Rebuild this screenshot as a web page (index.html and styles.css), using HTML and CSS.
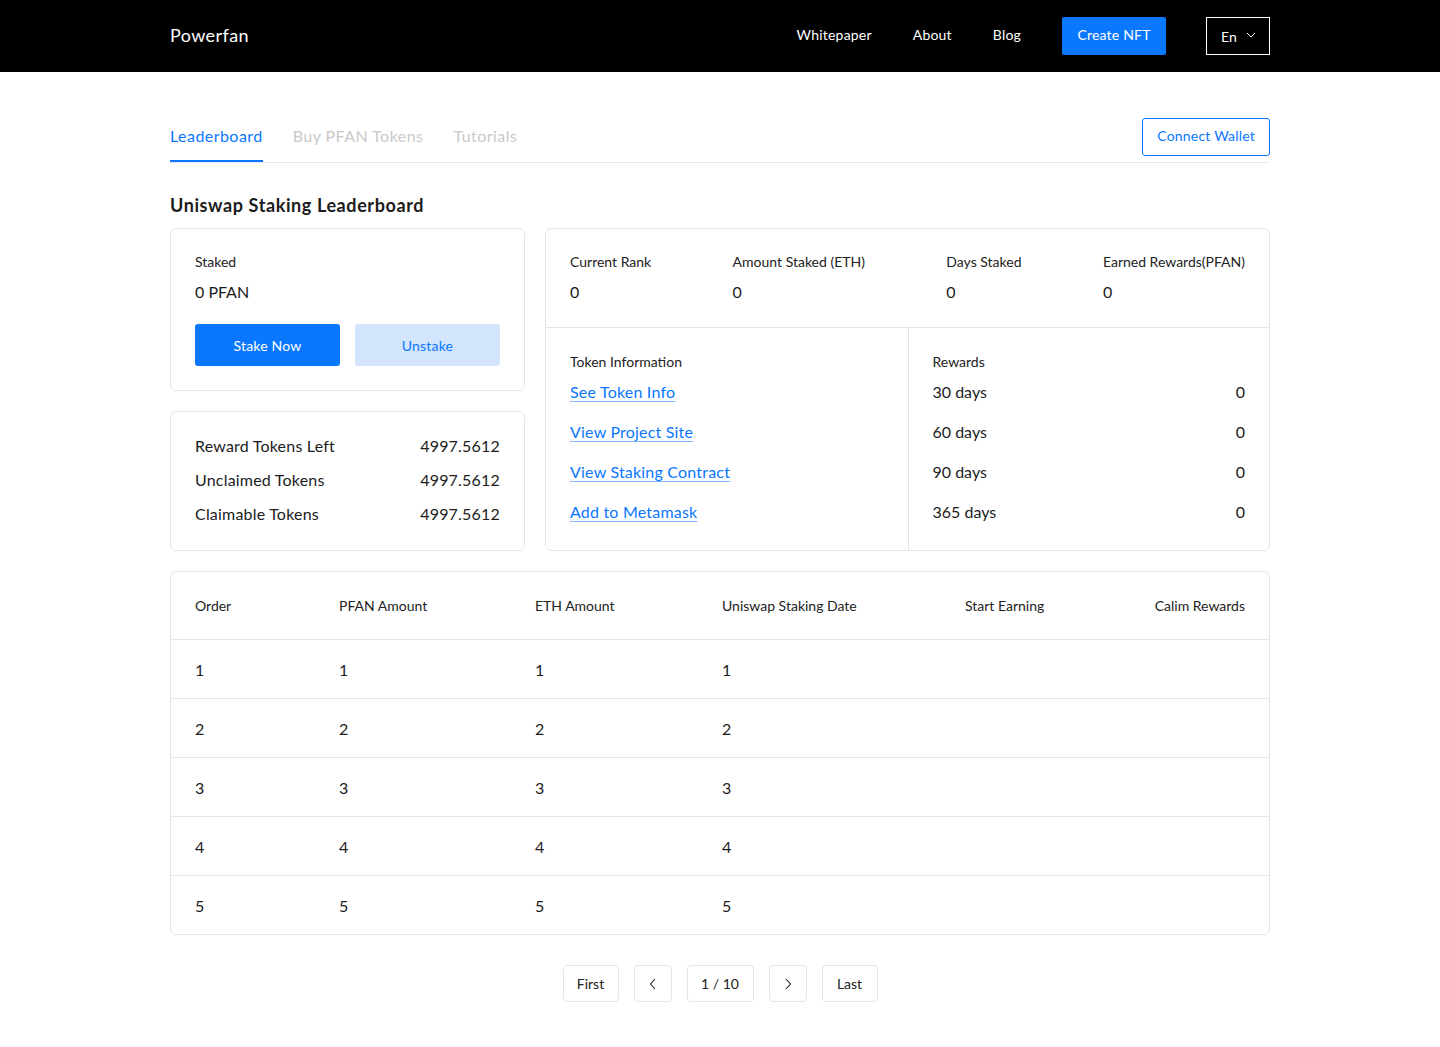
FILE: index.html
```html
<!DOCTYPE html>
<html lang="en">
<head>
<meta charset="utf-8">
<title>Powerfan - Uniswap Staking Leaderboard</title>
<link rel="stylesheet" href="styles.css">
</head>
<body>
<header class="topbar">
  <div class="wrap topbar-inner">
    <div class="logo">Powerfan</div>
    <nav class="nav">
      <a class="nav-link" href="#">Whitepaper</a>
      <a class="nav-link" href="#">About</a>
      <a class="nav-link" href="#">Blog</a>
      <a class="btn-create" href="#">Create NFT</a>
      <div class="lang">En
        <svg class="lang-caret" width="10" height="6" viewBox="0 0 10 6"><path d="M1 1l4 4 4-4" fill="none" stroke="#fff" stroke-width="1"/></svg>
      </div>
    </nav>
  </div>
</header>

<main class="wrap">
  <div class="tabs-bar">
    <div class="tabs">
      <a class="tab active" href="#">Leaderboard</a>
      <a class="tab" href="#">Buy PFAN Tokens</a>
      <a class="tab" href="#">Tutorials</a>
    </div>
    <button class="btn-outline">Connect Wallet</button>
  </div>

  <h1 class="page-title">Uniswap Staking Leaderboard</h1>

  <div class="cards">
    <div class="left-col">
      <section class="card stake-card">
        <div class="label">Staked</div>
        <div class="value">0 PFAN</div>
        <div class="stake-actions">
          <button class="btn-primary">Stake Now</button>
          <button class="btn-light">Unstake</button>
        </div>
      </section>
      <section class="card tokens-card">
        <div class="kv"><span>Reward Tokens Left</span><span>4997.5612</span></div>
        <div class="kv"><span>Unclaimed Tokens</span><span>4997.5612</span></div>
        <div class="kv"><span>Claimable Tokens</span><span>4997.5612</span></div>
      </section>
    </div>

    <section class="card info-card">
      <div class="stats">
        <div class="stat"><div class="label">Current Rank</div><div class="value">0</div></div>
        <div class="stat"><div class="label">Amount Staked (ETH)</div><div class="value">0</div></div>
        <div class="stat"><div class="label">Days Staked</div><div class="value">0</div></div>
        <div class="stat"><div class="label">Earned Rewards(PFAN)</div><div class="value">0</div></div>
      </div>
      <div class="info-split">
        <div class="info-col">
          <div class="label">Token Information</div>
          <div class="links">
            <a class="link" href="#">See Token Info</a>
            <a class="link" href="#">View Project Site</a>
            <a class="link" href="#">View Staking Contract</a>
            <a class="link" href="#">Add to Metamask</a>
          </div>
        </div>
        <div class="info-col rewards">
          <div class="label">Rewards</div>
          <div class="links">
            <div class="reward-row"><span>30 days</span><span>0</span></div>
            <div class="reward-row"><span>60 days</span><span>0</span></div>
            <div class="reward-row"><span>90 days</span><span>0</span></div>
            <div class="reward-row"><span>365 days</span><span>0</span></div>
          </div>
        </div>
      </div>
    </section>
  </div>

  <section class="card table-card">
    <div class="trow thead">
      <div>Order</div><div>PFAN Amount</div><div>ETH Amount</div><div>Uniswap Staking Date</div><div>Start Earning</div><div>Calim Rewards</div>
    </div>
    <div class="trow"><div>1</div><div>1</div><div>1</div><div>1</div><div></div><div></div></div>
    <div class="trow"><div>2</div><div>2</div><div>2</div><div>2</div><div></div><div></div></div>
    <div class="trow"><div>3</div><div>3</div><div>3</div><div>3</div><div></div><div></div></div>
    <div class="trow"><div>4</div><div>4</div><div>4</div><div>4</div><div></div><div></div></div>
    <div class="trow"><div>5</div><div>5</div><div>5</div><div>5</div><div></div><div></div></div>
  </section>

  <nav class="pager">
    <button class="pg pg-text">First</button>
    <button class="pg pg-icon" aria-label="Previous">
      <svg width="8" height="12" viewBox="0 0 8 12"><path d="M6 1L1.5 6 6 11" fill="none" stroke="#222" stroke-width="1.1"/></svg>
    </button>
    <div class="pg pg-count">1 / 10</div>
    <button class="pg pg-icon" aria-label="Next">
      <svg width="8" height="12" viewBox="0 0 8 12"><path d="M2 1l4.5 5L2 11" fill="none" stroke="#222" stroke-width="1.1"/></svg>
    </button>
    <button class="pg pg-text">Last</button>
  </nav>
</main>
</body>
</html>
```

FILE: styles.css
```css
* { box-sizing: border-box; }

body {
  margin: 0;
  font-family: "Lato", "Open Sans", sans-serif;
  color: #1c1c1c;
  background: #fff;
}

a { text-decoration: none; color: inherit; }
button { font-family: inherit; cursor: pointer; }

.wrap {
  width: 1100px;
  margin: 0 auto;
}

/* Top bar */
.topbar {
  background: #000;
  height: 72px;
}
.topbar-inner {
  height: 72px;
  display: flex;
  align-items: center;
  justify-content: space-between;
}
.logo {
  color: #fff;
  font-size: 18px;
  letter-spacing: 0.4px;
  padding-bottom: 2px;
}
.nav {
  display: flex;
  align-items: center;
}
.nav-link {
  color: #fff;
  font-size: 14px;
  margin-right: 41px;
  letter-spacing: 0.2px;
  padding-bottom: 3px;
}
.btn-create {
  background: #0a77ff;
  color: #fff;
  font-size: 14px;
  height: 38px;
  width: 104px;
  display: flex;
  align-items: center;
  justify-content: center;
  border-radius: 2px;
  letter-spacing: 0.2px;
  padding-bottom: 3px;
}
.lang {
  margin-left: 40px;
  width: 64px;
  height: 38px;
  border: 1px solid #fff;
  color: #fff;
  font-size: 14px;
  display: flex;
  align-items: center;
  padding-left: 14px;
  padding-top: 1px;
}
.lang-caret {
  margin-left: 9px;
  margin-top: -3px;
}

/* Tabs */
.tabs-bar {
  margin-top: 46px;
  display: flex;
  justify-content: space-between;
  align-items: flex-start;
  border-bottom: 1px solid #e9e9e9;
  height: 45px;
}
.tabs {
  display: flex;
  gap: 30px;
}
.tab {
  font-size: 16px;
  line-height: 24px;
  padding: 6px 0 12px;
  color: #c9c9c9;
  border-bottom: 2px solid transparent;
  letter-spacing: 0.45px;
}
.tab.active {
  color: #0a77ff;
  border-bottom-color: #0a77ff;
}
.btn-outline {
  height: 38px;
  padding: 0 14px 3px;
  background: #fff;
  border: 1px solid #0a77ff;
  border-radius: 3px;
  color: #0a77ff;
  font-size: 14px;
  letter-spacing: 0.2px;
}

.page-title {
  margin: 30px 0 11px;
  font-size: 18px;
  line-height: 24px;
  font-weight: 700;
  letter-spacing: 0.6px;
}

/* Cards */
.cards {
  display: grid;
  grid-template-columns: 355px 725px;
  gap: 20px;
}
.left-col {
  display: flex;
  flex-direction: column;
  gap: 20px;
}
.card {
  border: 1px solid #e6e6e6;
  border-radius: 6px;
  background: #fff;
}
.label {
  font-size: 14px;
  line-height: 20px;
  color: #222;
}
.value {
  font-size: 16px;
  line-height: 22px;
  margin-top: 9px;
}

.stake-card {
  padding: 23px 24px 24px;
}
.stake-actions {
  margin-top: 21px;
  display: flex;
  gap: 15px;
}
.btn-primary, .btn-light {
  flex: 1;
  height: 42px;
  border: none;
  border-radius: 3px;
  font-size: 14px;
  letter-spacing: 0.2px;
}
.btn-primary { background: #0a77ff; color: #fff; }
.btn-light { background: #d2e5fd; color: #0a77ff; }

.tokens-card {
  padding: 17px 24px 18px;
  flex: 1;
}
.kv {
  display: flex;
  justify-content: space-between;
  font-size: 16px;
  line-height: 34px;
  letter-spacing: 0.2px;
}

.info-card {
  display: flex;
  flex-direction: column;
}
.stats {
  display: flex;
  justify-content: space-between;
  padding: 23px 24px 24px;
  border-bottom: 1px solid #e6e6e6;
}
.info-split {
  flex: 1;
  display: grid;
  grid-template-columns: 1fr 1fr;
}
.info-col {
  padding: 24px 24px 26px;
}
.info-col.rewards {
  border-left: 1px solid #e6e6e6;
}
.links {
  margin-top: 8px;
  display: flex;
  flex-direction: column;
  gap: 16px;
}
.link {
  font-size: 16px;
  line-height: 24px;
  color: #0a77ff;
  text-decoration: underline;
  text-decoration-color: #7fb6ff;
  text-underline-offset: 3px;
  align-self: flex-start;
  letter-spacing: 0.2px;
}
.reward-row {
  display: flex;
  justify-content: space-between;
  font-size: 16px;
  line-height: 24px;
}

/* Table */
.table-card {
  margin-top: 20px;
}
.trow {
  display: grid;
  grid-template-columns: 144px 196px 187px 243px 187px 1fr;
  padding: 0 24px;
  height: 59px;
  align-items: center;
  font-size: 16px;
  border-bottom: 1px solid #e6e6e6;
}
.trow:last-child { border-bottom: none; height: 58px; }
.trow.thead {
  height: 68px;
  font-size: 14px;
  color: #222;
}
.trow.thead > div:last-child { text-align: right; }

/* Pager */
.pager {
  margin: 30px 0 45px;
  display: flex;
  justify-content: center;
  gap: 15px;
}
.pg {
  height: 37px;
  border: 1px solid #e6e6e6;
  border-radius: 4px;
  background: #fff;
  font-size: 14px;
  color: #222;
  display: flex;
  align-items: center;
  justify-content: center;
  padding-bottom: 1px;
}
.pg-text { width: 56px; }
.pg-icon { width: 38px; padding: 0; }
.pg-count { width: 67px; }
```
